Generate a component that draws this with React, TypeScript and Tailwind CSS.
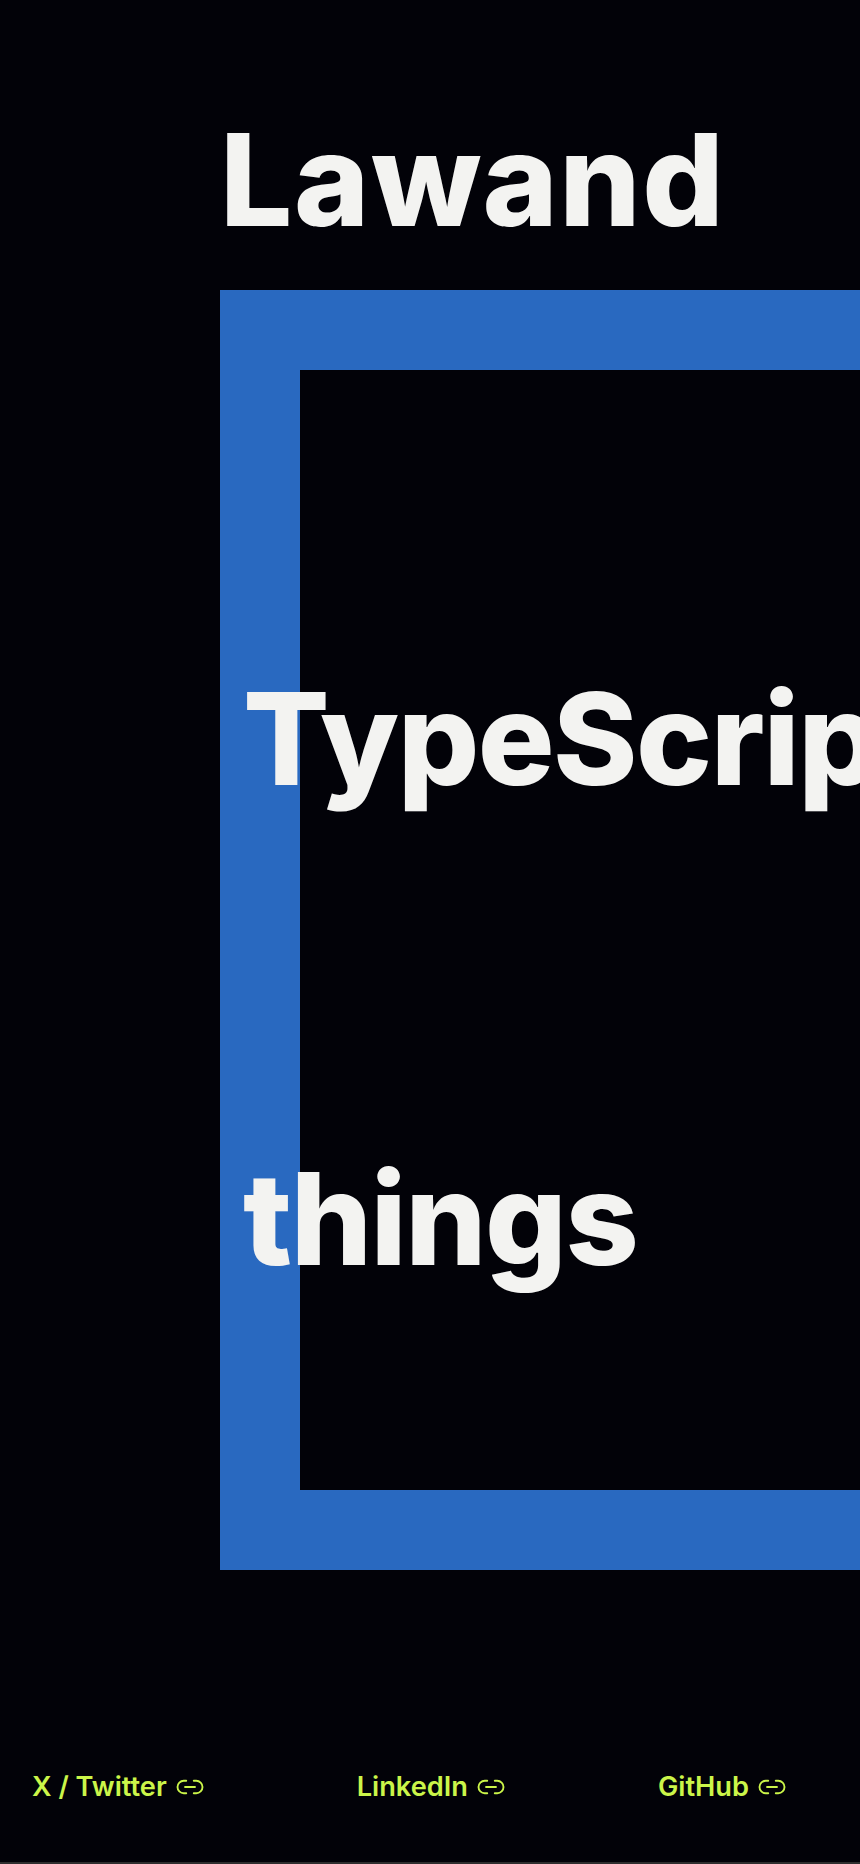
import React from 'react';

const LinkIcon = () => (
  <svg width="30" height="30" viewBox="0 0 24 24" fill="none" stroke="currentColor" strokeWidth="1.5" strokeLinecap="round" strokeLinejoin="round">
    <path d="M9 17H7A5 5 0 0 1 7 7h2" />
    <path d="M15 7h2a5 5 0 1 1 0 10h-2" />
    <line x1="8" x2="16" y1="12" y2="12" />
  </svg>
);

const links = ['X / Twitter', 'LinkedIn', 'GitHub'];

export default function App() {
  return (
    <div className="relative h-[1864px] w-[860px] overflow-hidden bg-[#020208] font-['Inter',sans-serif] flex flex-col">
      <div className="pl-[220px] pt-[85px] h-[290px] shrink-0">
        <h1 className="text-[128px] leading-[190px] font-extrabold tracking-[0.0125em] text-[#f3f3f1]">Lawand</h1>
      </div>

      {/* Blue frame, the words hang over its left edge */}
      <div className="ml-[220px] w-[1400px] h-[1280px] shrink-0 border-[80px] border-[#2969c0]">
        <div className="-ml-[57px] pt-[272px] flex flex-col gap-[286px] text-[128px] leading-[194px] font-extrabold tracking-[-0.012em] text-[#f3f3f1]">
          <span>TypeScript</span>
          <span>things</span>
        </div>
      </div>

      <div className="mt-[197px] pl-8 flex gap-[152px] text-[27.2px] leading-[40px] font-semibold text-[#cbf549]">
        {links.map((l) => (
          <a key={l} className="flex items-center gap-2">
            {l}
            <LinkIcon />
          </a>
        ))}
      </div>

      <div className="absolute bottom-0 left-0 right-0 h-[2px] bg-[#2e2e2e]" />
    </div>
  );
}
